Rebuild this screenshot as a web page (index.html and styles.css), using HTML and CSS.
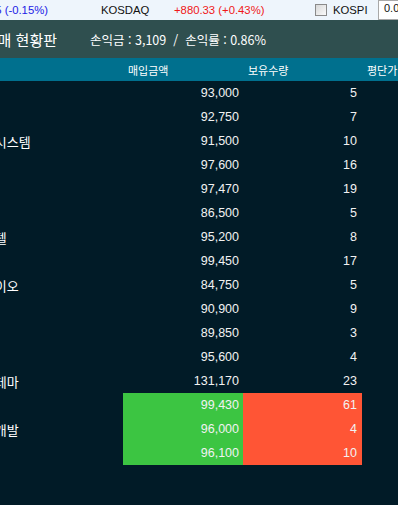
FILE: index.html
```html
<!DOCTYPE html>
<html lang="ko">

<head>
  <meta charset="UTF-8">
  <meta name="viewport" content="width=device-width">
  <title>주식 매매 현황판</title>
  <link rel="stylesheet" href="styles.css">
</head>

<body>

  <div class="page">

    <div class="ticker">
      <span class="idx-down">2,591.45 (-0.15%)</span>
      <span class="idx-name">KOSDAQ</span>
      <span class="idx-up">+880.33 (+0.43%)</span>
      <label class="idx-check"><span class="box"></span>KOSPI</label>
      <span class="idx-input">0.00</span>
    </div>

    <div class="titlebar">
      <h1>주식 매매 현황판</h1>
      <p class="summary">손익금 : 3,109 &nbsp;/&nbsp; 손익률 : 0.86%</p>
    </div>

    <div class="row head">
      <div>종목명</div>
      <div>매입금액</div>
      <div>보유수량</div>
      <div>평단가</div>
    </div>

    <div class="row"><div class="name">삼성전자</div><div class="num">93,000</div><div class="num">5</div><div class="num">18,600</div></div>
    <div class="row"><div class="name">LG화학</div><div class="num">92,750</div><div class="num">7</div><div class="num">13,250</div></div>
    <div class="row"><div class="name">현대오토시스템</div><div class="num">91,500</div><div class="num">10</div><div class="num">9,150</div></div>
    <div class="row"><div class="name">카카오</div><div class="num">97,600</div><div class="num">16</div><div class="num">6,100</div></div>
    <div class="row"><div class="name">네이버</div><div class="num">97,470</div><div class="num">19</div><div class="num">5,130</div></div>
    <div class="row"><div class="name">셀트리온</div><div class="num">86,500</div><div class="num">5</div><div class="num">17,300</div></div>
    <div class="row"><div class="name">그랜드호텔</div><div class="num">95,200</div><div class="num">8</div><div class="num">11,900</div></div>
    <div class="row"><div class="name">기아차</div><div class="num">99,450</div><div class="num">17</div><div class="num">5,850</div></div>
    <div class="row"><div class="name">녹십자바이오</div><div class="num">84,750</div><div class="num">5</div><div class="num">16,950</div></div>
    <div class="row"><div class="name">한국전력</div><div class="num">90,900</div><div class="num">9</div><div class="num">10,100</div></div>
    <div class="row"><div class="name">포스코</div><div class="num">89,850</div><div class="num">3</div><div class="num">29,950</div></div>
    <div class="row"><div class="name">현대차</div><div class="num">95,600</div><div class="num">4</div><div class="num">23,900</div></div>
    <div class="row"><div class="name">로봇관련테마</div><div class="num">131,170</div><div class="num">23</div><div class="num">5,703</div></div>
    <div class="row"><div class="name">삼성SDI</div><div class="num buy">99,430</div><div class="num hold">61</div><div class="num">1,630</div></div>
    <div class="row"><div class="name">현대산업개발</div><div class="num buy">96,000</div><div class="num hold">4</div><div class="num">24,000</div></div>
    <div class="row"><div class="name">두산</div><div class="num buy">96,100</div><div class="num hold">10</div><div class="num">9,610</div></div>

  </div>

</body>

</html>
```

FILE: styles.css
```css
* {
  box-sizing: border-box;
  margin: 0;
  padding: 0;
}

body {
  background-color: #011b27;
  overflow: hidden;
  font-family: "Liberation Sans", Arial, sans-serif;
  color: #f2f2f2;
}

/* the board is wider than the window, scrolled a little to the right */
.page {
  width: 530px;
  margin-left: -64px;
}

.ticker {
  display: flex;
  align-items: center;
  height: 20px;
  background-color: #eef5fc;
  font-size: 11.3px;
  color: #111;
  white-space: nowrap;
}

.ticker > * {
  flex-shrink: 0;
}

.idx-down {
  width: 112px;
  overflow: hidden;
  text-align: right;
  color: #1c1ce6;
}

.idx-name {
  width: 73px;
  margin-left: 53px;
}

.idx-up {
  width: 141px;
  color: #f01818;
}

.idx-check {
  display: flex;
  align-items: center;
  width: 63px;
}

.idx-check .box {
  width: 12px;
  height: 12px;
  margin-right: 6px;
  border: 1px solid #8a8a8a;
  background: linear-gradient(135deg, #d8d8d8, #fafafa);
}

.idx-input {
  width: 70px;
  height: 20px;
  padding: 1px 0 0 5px;
  border: 1px solid #a8a8a8;
  background-color: #fff;
  align-self: flex-start;
  font-size: 11px;
}

.titlebar {
  display: flex;
  align-items: center;
  height: 38px;
  background-color: #2f4f4f;
  font-family: "Noto Sans CJK KR", sans-serif;
  color: #fff;
  white-space: nowrap;
}

h1 {
  flex-shrink: 0;
  width: 121px;
  overflow: hidden;
  text-align: right;
  font-size: 15px;
  font-weight: normal;
}

.summary {
  margin-left: 33px;
  font-size: 12.5px;
}

.row {
  display: grid;
  grid-template-columns: 187px 120px 119px 104px;
  height: 24px;
  align-items: stretch;
}

.row > div {
  display: flex;
  align-items: center;
  white-space: nowrap;
}

.head {
  height: 23px;
  background-color: #00708e;
  font-family: "Noto Sans CJK KR", sans-serif;
  font-size: 11px;
  color: #fff;
}

.head > div {
  padding-left: 5px;
}

.name {
  padding-left: 11px;
  font-family: "Noto Sans CJK KR", sans-serif;
  font-size: 13px;
  color: #fff;
}

.num {
  justify-content: flex-end;
  padding-right: 4px;
  font-size: 12.5px;
}

.num + .num {
  padding-right: 5px;
}

.buy {
  background-color: #3cc542;
}

.hold {
  background-color: #ff5535;
}
```
